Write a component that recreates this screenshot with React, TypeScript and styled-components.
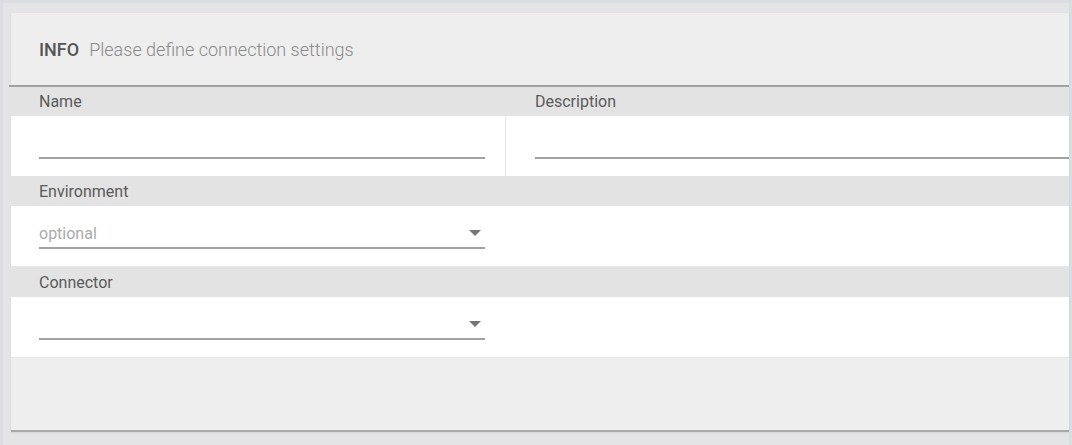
import styled, {createGlobalStyle} from 'styled-components';

const GlobalStyle = createGlobalStyle`
	html, body {
		margin: 0;
		padding: 0;
		background-color: #dcdde0;
		font-family: Roboto, 'Liberation Sans', sans-serif;
	}
	* {
		box-sizing: border-box;
	}
`;
const Wrapper = styled.div`
	margin: 3px 3px 0 3px;
	padding: 10px 0 13px 8px;
	height: 442px;
	background-color: #e4e4e6;
`;
const Panel = styled.div`
	display: flex;
	flex-direction: column;
	background-color: #eeeeee;
	border-bottom: 2px solid #a9a9a9;
	box-shadow: 0 1px 2px rgba(0, 0, 0, 0.08);
`;
const Header = styled.div`
	display: flex;
	align-items: center;
	gap: 10px;
	height: 72px;
	padding: 0 28px;
	font-size: 18px;
	strong {
		font-weight: 500;
		color: #555555;
	}
	span {
		font-weight: 300;
		color: #8a8a8a;
	}
`;
const Rule = styled.div`
	margin-left: -2px;
	height: 2px;
	background-color: #a2a2a2;
`;
const LabelRow = styled.div<{$first?: boolean}>`
	display: grid;
	grid-template-columns: 496px 1fr;
	margin-left: -2px;
	height: ${(props) => (props.$first ? '29px' : '30px')};
	background-color: #e3e3e3;
`;
const Label = styled.div`
	display: flex;
	align-items: center;
	padding-left: 30px;
	font-size: 16px;
	color: #5a5a5a;
`;
const FieldRow = styled.div<{$first?: boolean}>`
	display: grid;
	grid-template-columns: 495px 1fr;
	height: ${(props) => (props.$first ? '60px' : '61px')};
	background-color: #ffffff;
	border-bottom: ${(props) => (props.$first ? 'none' : '1px solid #e6e6e6')};
`;
const FieldCell = styled.div<{$divided?: boolean}>`
	display: flex;
	align-items: flex-end;
	padding: 0 21px 17px 28px;
	border-right: ${(props) => (props.$divided ? '1px solid #e6e6e6' : 'none')};
	&.divided {
		padding-right: 20px;
	}
	&.wide {
		padding: 0 0 17px 29px;
	}
`;
const Input = styled.div`
	display: flex;
	align-items: center;
	justify-content: space-between;
	width: 100%;
	height: 28px;
	padding-bottom: 2px;
	border-bottom: 2px solid #a2a2a2;
	font-size: 16px;
	color: #ababab;
`;
const Arrow = styled.div`
	margin-right: 4px;
	width: 0;
	height: 0;
	border-left: 6.5px solid transparent;
	border-right: 6.5px solid transparent;
	border-top: 6px solid #757575;
`;
const Footer = styled.div`
	height: 72px;
`;

function App() {
	return (
		<>
			<GlobalStyle />
			<Wrapper>
				<Panel>
					<Header>
						<strong>INFO</strong>
						<span>Please define connection settings</span>
					</Header>
					<Rule />
					<LabelRow $first>
						<Label>Name</Label>
						<Label>Description</Label>
					</LabelRow>
					<FieldRow $first>
						<FieldCell $divided className="divided">
							<Input />
						</FieldCell>
						<FieldCell className="wide">
							<Input />
						</FieldCell>
					</FieldRow>
					<LabelRow>
						<Label>Environment</Label>
					</LabelRow>
					<FieldRow>
						<FieldCell>
							<Input>
								optional
								<Arrow />
							</Input>
						</FieldCell>
					</FieldRow>
					<LabelRow>
						<Label>Connector</Label>
					</LabelRow>
					<FieldRow>
						<FieldCell>
							<Input>
								<span />
								<Arrow />
							</Input>
						</FieldCell>
					</FieldRow>
					<Footer />
				</Panel>
			</Wrapper>
		</>
	);
}

export default App;
